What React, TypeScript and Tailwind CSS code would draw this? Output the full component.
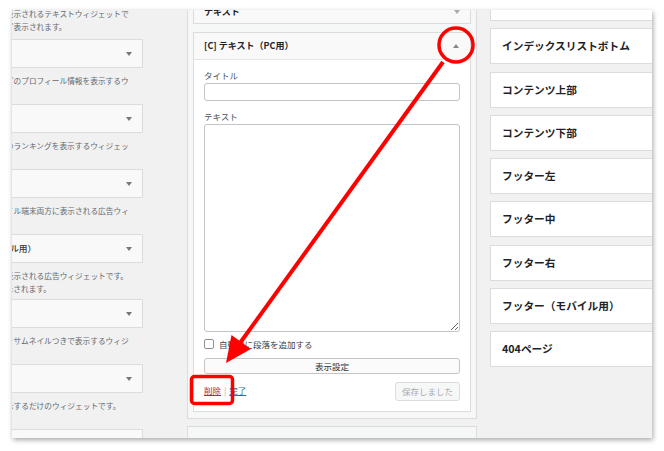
import React from "react";

function Select({ label }: { label: string }) {
  return (
    <div className="relative flex h-[29px] items-center whitespace-nowrap border border-[#dcdcde] bg-[#f9f9f9] pl-[5px] text-[8.7px] font-medium text-[#32373c]">
      {label}
      <span className="absolute right-[10px] top-[12px] h-0 w-0 border-x-[3px] border-t-[4px] border-x-transparent border-t-[#777]" />
    </div>
  );
}

function Desc({ a, b, first }: { a: string; b: string; first?: boolean }) {
  return (
    <div
      className={
        first
          ? "mt-[-3px] mb-[6px] whitespace-nowrap text-[7.7px] leading-[13px] text-[#646970]"
          : "mt-[6px] mb-[4px] whitespace-nowrap text-[7.7px] leading-[13px] text-[#646970]"
      }
    >
      <div>{a}</div>
      <div>{b}</div>
    </div>
  );
}

const leftItems = [
  { sel: "ヘッダー下部", a: "サイト運営者などのプロフィール情報を表示するウ", b: "ィジェット。" },
  { sel: "プロフィール", a: "人気の記事などのランキングを表示するウィジェッ", b: "ト。" },
  { sel: "人気記事", a: "パソコンとモバイル端末両方に表示される広告ウィ", b: "ジェット。" },
  { sel: "広告（モバイル用）", a: "モバイルのみに表示される広告ウィジェットです。", b: "スマホのみで表示されます。" },
  { sel: "新着記事", a: "新着記事の一覧をサムネイルつきで表示するウィジ", b: "ェット。" },
  { sel: "リンク一覧", a: "リンクを一覧表示するだけのウィジェットです。", b: "（簡易版）" },
  { sel: "カテゴリー", a: "", b: "" },
];

const areas = [
  "ヘッダー下",
  "インデックスリストボトム",
  "コンテンツ上部",
  "コンテンツ下部",
  "フッター左",
  "フッター中",
  "フッター右",
  "フッター（モバイル用）",
  "404ページ",
];

export default function App() {
  return (
    <div className="relative h-[451px] w-[664px] overflow-hidden bg-white pl-[12px] pt-[10px] font-['Noto_Sans_CJK_JP',sans-serif]">
      {/* screenshot frame */}
      <div className="flex h-[428px] w-[640px] items-start overflow-hidden bg-[#f1f1f1] shadow-[1px_2px_5px_rgba(0,0,0,0.35)]">
        {/* available widgets (cut off) */}
        <div className="ml-[-60px] flex w-[191px] shrink-0 flex-col">
          <Desc first a="ヘッダー下部に表示されるテキストウィジェットで" b="全ての端末で必ず表示されます。" />
          {leftItems.map((it) => (
            <div key={it.sel}>
              <Select label={it.sel} />
              <Desc a={it.a} b={it.b} />
            </div>
          ))}
        </div>

        {/* sidebar being edited */}
        <div className="ml-[44px] flex w-[290px] shrink-0 flex-col">
          <div className="mt-[-21px] border border-[#dcdcde] bg-[#f6f7f7] px-[5px] pt-[5px] pb-[6px]">
            <div className="flex h-[29px] items-end justify-between border border-[#dcdcde] bg-[#f9f9f9] px-[10px] pb-[4px] text-[9px] leading-[14px] font-semibold text-[#1d2327]">
              <span>テキスト</span>
              <span className="mb-[5px] h-0 w-0 border-x-[3px] border-t-[4px] border-x-transparent border-t-[#aaa]" />
            </div>

            <div className="mt-[8px] border border-[#dcdcde] bg-white">
              <div className="flex h-[27px] items-center justify-between border-b border-[#e5e5e5] bg-[#f9f9f9] px-[10px] text-[9px] font-semibold text-[#1d2327]">
                <span>[C] テキスト（PC用）</span>
                <span className="mr-[1px] h-0 w-0 border-x-[3px] border-b-[4px] border-x-transparent border-b-[#888]" />
              </div>
              <div className="flex flex-col px-[10px] pt-[9px] pb-[10px] text-[8.5px] leading-[13px] text-[#3c434a]">
                <div className="mb-[1px] text-[#50575e]">タイトル</div>
                <input readOnly className="h-[18px] w-full rounded-[3px] border border-[#c3c4c7] bg-white" />
                <div className="mt-[9px] mb-[1px] text-[#50575e]">テキスト</div>
                <textarea readOnly className="block h-[208px] w-full resize-y rounded-[3px] border border-[#c3c4c7] bg-white" />
                <div className="mt-[6px] flex h-[12px] items-center gap-[5px]">
                  <span className="h-[10px] w-[10px] rounded-[2px] border border-[#8c8f94] bg-white" />
                  <span>自動的に段落を追加する</span>
                </div>
                <div className="mt-[8px] flex h-[16px] items-center justify-center rounded-[3px] border border-[#c3c4c7] bg-[#fbfbfb] text-[#2c3338]">
                  表示設定
                </div>
                <div className="mt-[8px] flex items-center justify-between">
                  <div className="flex items-center gap-[3px] pb-[3px]">
                    <span className="text-[#b32d2e] underline">削除</span>
                    <span className="text-[#a7aaad]">|</span>
                    <span className="text-[#2271b1] underline">完了</span>
                  </div>
                  <div className="flex h-[19px] items-center rounded-[3px] border border-[#dcdcde] bg-[#f6f7f7] px-[6px] text-[#a7aaad]">
                    保存しました
                  </div>
                </div>
              </div>
            </div>
          </div>
          <div className="mt-[7px] h-[30px] border border-[#dcdcde] bg-[#f6f7f7]" />
        </div>

        {/* other sidebars */}
        <div className="ml-[13px] mt-[-25px] flex w-[180px] shrink-0 flex-col gap-[7.3px]">
          {areas.map((name) => (
            <div
              key={name}
              className="flex h-[36px] items-center border border-[#dcdcde] bg-white pl-[11px] text-[10.7px] font-bold text-[#1d2327]"
            >
              {name}
            </div>
          ))}
        </div>
      </div>

      {/* red annotations */}
      <svg className="pointer-events-none absolute left-0 top-0" width="664" height="451">
        <circle cx="456" cy="45" r="17" fill="none" stroke="#f00" strokeWidth="3.5" />
        <line x1="443" y1="62" x2="240" y2="343" stroke="#f00" strokeWidth="4" />
        <polygon points="226,363 231.5,334.9 250.9,348.9" fill="#f00" />
        <rect x="191.5" y="376.5" width="41" height="27" rx="3" fill="none" stroke="#f00" strokeWidth="3.5" />
      </svg>
    </div>
  );
}
